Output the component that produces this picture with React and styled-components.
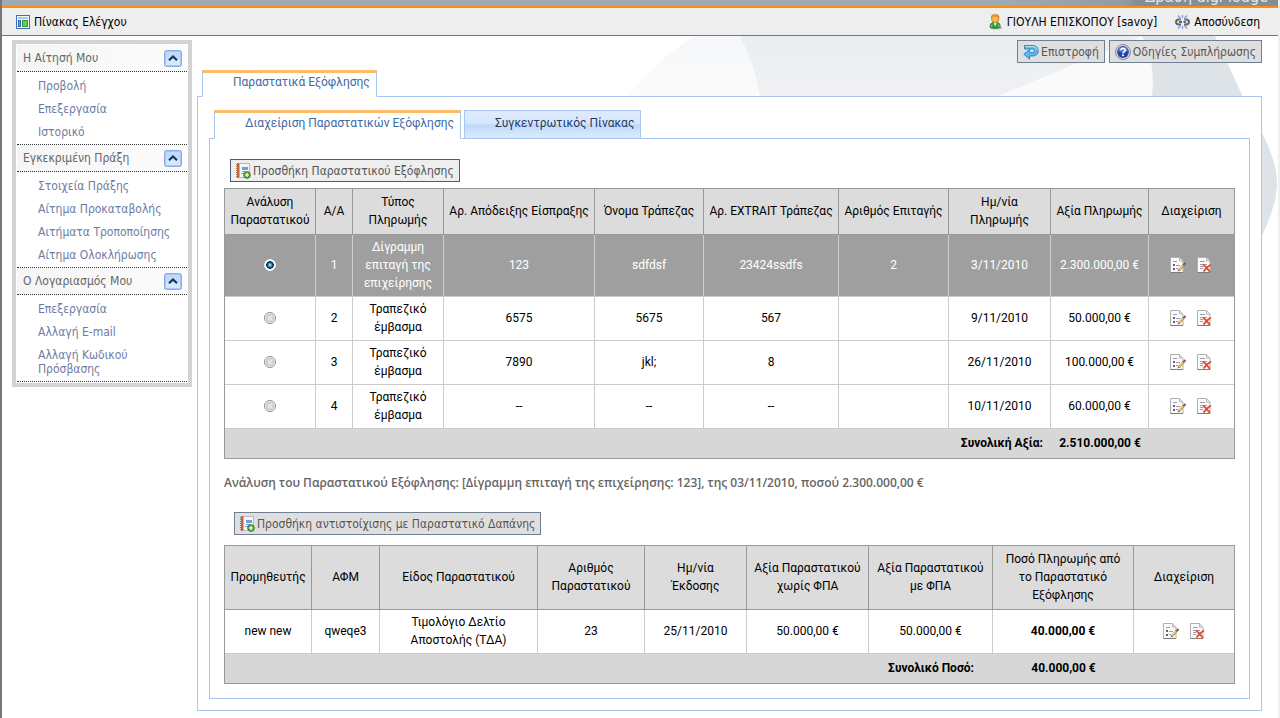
import React, { useState } from "react";
import styled, { createGlobalStyle } from "styled-components";

const menu = [
    { title: "Η Αίτησή Μου", items: ["Προβολή", "Επεξεργασία", "Ιστορικό"] },
    { title: "Εγκεκριμένη Πράξη", items: ["Στοιχεία Πράξης", "Αίτημα Προκαταβολής", "Αιτήματα Τροποποίησης", "Αίτημα Ολοκλήρωσης"] },
    { title: "Ο Λογαριασμός Μου", items: ["Επεξεργασία", "Αλλαγή E-mail", "Αλλαγή Κωδικού\nΠρόσβασης"] },
]

const paymentColumns = [
    { label: "Ανάλυση Παραστατικού", width: 91 },
    { label: "Α/Α", width: 37 },
    { label: "Τύπος\nΠληρωμής", width: 91 },
    { label: "Αρ. Απόδειξης Είσπραξης", width: 151 },
    { label: "Όνομα Τράπεζας", width: 109 },
    { label: "Αρ. EXTRAIT Τράπεζας", width: 135 },
    { label: "Αριθμός Επιταγής", width: 110 },
    { label: "Ημ/νία\nΠληρωμής", width: 102 },
    { label: "Αξία Πληρωμής", width: 98 },
    { label: "Διαχείριση", width: 85 },
]

const payments = [
    { id: 1, type: "Δίγραμμη επιταγή της επιχείρησης", receipt: "123", bank: "sdfdsf", extrait: "23424ssdfs", cheque: "2", date: "3/11/2010", amount: "2.300.000,00 €" },
    { id: 2, type: "Τραπεζικό έμβασμα", receipt: "6575", bank: "5675", extrait: "567", cheque: "", date: "9/11/2010", amount: "50.000,00 €" },
    { id: 3, type: "Τραπεζικό έμβασμα", receipt: "7890", bank: "jkl;", extrait: "8", cheque: "", date: "26/11/2010", amount: "100.000,00 €" },
    { id: 4, type: "Τραπεζικό έμβασμα", receipt: "--", bank: "--", extrait: "--", cheque: "", date: "10/11/2010", amount: "60.000,00 €" },
]

const expenseColumns = [
    { label: "Προμηθευτής", width: 87 },
    { label: "ΑΦΜ", width: 68 },
    { label: "Είδος Παραστατικού", width: 158 },
    { label: "Αριθμός Παραστατικού", width: 107 },
    { label: "Ημ/νία\nΈκδοσης", width: 102 },
    { label: "Αξία Παραστατικού\nχωρίς ΦΠΑ", width: 122 },
    { label: "Αξία Παραστατικού\nμε ΦΠΑ", width: 124 },
    { label: "Ποσό Πληρωμής από\nτο Παραστατικό\nΕξόφλησης", width: 141 },
    { label: "Διαχείριση", width: 100 },
]

const DashboardIcon = () => (
    <svg width="14" height="14" viewBox="0 0 14 14" aria-hidden="true">
        <rect x="0.5" y="0.5" width="13" height="13" fill="#f2f8ff" stroke="#3f6fb5" />
        <rect x="2" y="2" width="10" height="2" fill="#a5c8f0" />
        <rect x="2" y="5" width="3" height="7" fill="#2f65b0" />
        <rect x="3" y="6" width="1" height="5" fill="#7fa9dd" />
        <rect x="6" y="5" width="6" height="7" fill="#3c9a32" />
        <rect x="7" y="6" width="4" height="5" fill="#6cc45c" />
    </svg>
)

const UserIcon = () => (
    <svg width="13" height="16" viewBox="0 0 13 16" aria-hidden="true">
        <ellipse cx="7" cy="14" rx="6" ry="1.6" fill="#b9b9b9" />
        <path d="M1 13.5C0.6 10.5 2 8.6 4 8.4h4.4c2 0.2 3.2 2.1 2.8 5.1Q6 15.6 1 13.5z" fill="#2f9a3c" stroke="#1d7a2a" strokeWidth="0.6" />
        <path d="M4.5 8.5L6.2 12.5 8 8.5z" fill="#eef9ee" />
        <path d="M3 10.5l-0.5 2.5M9.5 10.5l0.5 2.5" stroke="#8fd692" />
        <path d="M2.4 3.2Q2.200 0.5 6.2 0.5T10 3.2L9.700 6.3Q9 8.9 6.2 8.9T2.700 6.3z" fill="#e9962c" stroke="#b9711b" strokeWidth="0.6" />
        <path d="M3.6 3.6Q6 2.4 8.8 3.6V6Q8.200 7.8 6.2 7.8T3.6 6z" fill="#f8bc66" />
    </svg>
)

const LogoutIcon = () => (
    <svg width="15" height="14" viewBox="0 0 15 14" fill="none" aria-hidden="true">
        <path d="M3 0.5l2.5 3M7.5 0v3M12 0.5L9.5 3.5M3 13.5l2.5-3M7.5 14v-3M12 13.5l-2.5-3" stroke="#7ea4dc" strokeWidth="1.3" />
        <path d="M6 4.500H4Q1 4.800 1 7t3 2.500H6M4 7h3M9 4.500h2Q14 4.800 14 7t-3 2.500H9M11 7H8.500" stroke="#666" strokeWidth="2" />
        <path d="M6 4.300H3.500M9 4.300h2.500" stroke="#aaa" strokeWidth="0.700" />
    </svg>
)

const BackIcon = () => (
    <svg width="16" height="16" viewBox="0 0 16 16" aria-hidden="true">
        <path d="M1.5 1.5h8.2Q15.2 2 15.2 6.8T9.7 12H6.5v3L0.8 10.2 6.5 5.6v3h3Q11.6 8.4 11.6 6.8T9.500 5H1.5z" fill="#5db9ee" stroke="#2d7fbd" strokeWidth="0.9" />
        <path d="M2.5 2.6h7Q13.8 3 14 6" fill="none" stroke="#c2e8fb" />
    </svg>
)

const HelpIcon = () => (
    <svg width="16" height="16" viewBox="0 0 16 16" aria-hidden="true">
        <circle cx="8" cy="8" r="7.5" fill="#d8d8d8" stroke="#8c8c8c" />
        <circle cx="8" cy="8" r="5.9" fill="#2446a8" />
        <path d="M2.8 7Q3.5 2.8 8 2.7T13.2 7Q8 9 2.8 7z" fill="#5a7fd8" />
        <path d="M5.9 6.3Q6 4.4 8 4.4T10.2 6.1Q10.2 7.3 8.9 7.9 8 8.4 8 9.4" fill="none" stroke="#fff" strokeWidth="1.6" />
        <rect x="7.1" y="10.4" width="1.8" height="1.7" fill="#fff" />
    </svg>
)

const AddDocIcon = () => (
    <svg width="15" height="16" viewBox="0 0 15 16" aria-hidden="true">
        <path d="M3.5 0.5h10v14h-10z" fill="#f5f6f8" stroke="#b8b8b8" />
        <rect x="1" y="0" width="2" height="15" fill="#c2683a" />
        <path d="M0 1.5h2M0 3.5h2M0 5.5h2M0 7.5h2M0 9.5h2M0 11.5h2M0 13.5h2" stroke="#a5714f" />
        <rect x="6" y="4" width="6" height="3" fill="#6f9be2" />
        <path d="M6 8.5h4M5 10.5h3" stroke="#7ea3e0" />
        <circle cx="11" cy="12" r="3.4" fill="#5aa336" stroke="#3b7a22" strokeWidth="0.8" />
        <path d="M9 12h4M11 10v4" stroke="#fff" strokeWidth="1.2" />
    </svg>
)

const EditIcon = () => (
    <svg width="16" height="16" viewBox="0 0 16 16" aria-hidden="true">
        <path d="M0.5 0.5h9l3.5 3.5v11.500H0.5z" fill="#fbfbfb" stroke="#b0b0b0" />
        <path d="M0.5 15.5H13" stroke="#7c7c7c" />
        <path d="M9.5 0.5V4H13" fill="#e6e6e6" stroke="#b5b5b5" />
        <path d="M3 4.5h4M6 8.5h4M6 11.5h2" stroke="#9a9ab4" />
        <path d="M3 7h2v2H3zM3 11h2v2H3z" fill="#5c5c84" />
        <path d="M8.5 13.5L14 7.5" stroke="#b08a44" strokeWidth="2.4" />
        <path d="M8.5 13.2L13.5 7.8" stroke="#f0ce82" strokeWidth="1.2" />
        <path d="M13.3 8.2L14.300 7.200" stroke="#4a7a4a" strokeWidth="2" />
        <path d="M14.300 7.200L15.5 6" stroke="#b03a3a" strokeWidth="2" />
        <path d="M7.5 14.5l1-2 1 1z" fill="#6b5426" />
    </svg>
)

const DeleteIcon = () => (
    <svg width="16" height="16" viewBox="0 0 16 16" aria-hidden="true">
        <path d="M0.5 0.5h9l3.5 3.5v11.500H0.5z" fill="#fbfbfb" stroke="#b0b0b0" />
        <path d="M0.5 15.5H13" stroke="#7c7c7c" />
        <path d="M9.5 0.5V4H13" fill="#e6e6e6" stroke="#b5b5b5" />
        <path d="M3 4.5h5M3 7.5h7M3 9.5h3M3 11.500h3" stroke="#9a9ab4" />
        <path d="M6 7.5Q9.5 10 13 15M14 7.5Q9.5 10 6.5 14.5" fill="none" stroke="#e2492f" strokeWidth="1.8" />
    </svg>
)

const ChevronIcon = () => (
    <svg width="18" height="17" viewBox="0 0 18 17" aria-hidden="true">
        <rect x="0.5" y="0.5" width="17" height="16" rx="2" fill="#a9c4f2" stroke="#8faae6" />
        <rect x="2" y="2" width="14" height="13" rx="1" fill="#bfdafb" />
        <rect x="2" y="9" width="14" height="6" fill="#d3eafe" />
        <path d="M5 10.2L9 6.5l4 3.7" fill="none" stroke="#1b3358" strokeWidth="2.2" />
    </svg>
)

const Backdrop = () => (
    <BackdropSvg width="660" height="260" viewBox="620 36 660 260" aria-hidden="true">
        <defs>
            <linearGradient id="pale" x1="0" y1="0" x2="0" y2="1">
                <stop offset="0" stopColor="#f5f7fa" />
                <stop offset="1" stopColor="#fbfbfb" />
            </linearGradient>
            <linearGradient id="mist" x1="0" y1="0" x2="0" y2="1">
                <stop offset="0" stopColor="#e9eef0" />
                <stop offset="1" stopColor="#f0f0f3" />
            </linearGradient>
        </defs>
        <path d="M694 36Q654 62 627 97H762V36z" fill="url(#pale)" />
        <path d="M740 36Q755 64 760 97H996L1143 36z" fill="url(#mist)" />
        <path d="M996 97L1143 36H1160V97z" fill="#fafafa" />
        <path d="M1142 36Q1156 62 1152 97H1243L1215 36z" fill="#dde3e6" />
        <path d="M1255 120Q1278 160 1277 185T1255 250z" fill="#dde3e6" />
    </BackdropSvg>
)

const RowActions = () => (
    <Actions>
        <IconButton aria-label="Επεξεργασία"><EditIcon /></IconButton>
        <IconButton aria-label="Διαγραφή"><DeleteIcon /></IconButton>
    </Actions>
)

const TableHead = ({columns}) => (
    <>
        <colgroup>
            {columns.map((column) => <Col key={column.label} $width={column.width} />)}
        </colgroup>
        <thead>
            <tr>
                {columns.map((column) => <th key={column.label} scope="col">{column.label}</th>)}
            </tr>
        </thead>
    </>
)

const Sidebar = () => (
    <Menu>
        {menu.map((group) => (
            <section key={group.title}>
                <MenuTitle>
                    <h2>{group.title}</h2>
                    <IconButton aria-label={group.title}><ChevronIcon /></IconButton>
                </MenuTitle>
                <MenuList>
                    {group.items.map((item) => <li key={item}><a href="#">{item}</a></li>)}
                </MenuList>
            </section>
        ))}
    </Menu>
)

const PaymentsTable = ({selected, onSelect}) => (
    <Table>
        <TableHead columns={paymentColumns} />
        <tbody>
            {payments.map((payment) => (
                <Row key={payment.id} $selected={payment.id === selected}>
                    <td>
                        <Radio
                            type="radio"
                            name="payment"
                            aria-label={`Παραστατικό ${payment.id}`}
                            checked={payment.id === selected}
                            onChange={() => onSelect(payment.id)}
                        />
                    </td>
                    <td>{payment.id}</td>
                    <td>{payment.type}</td>
                    <td>{payment.receipt}</td>
                    <td>{payment.bank}</td>
                    <td>{payment.extrait}</td>
                    <td>{payment.cheque}</td>
                    <td>{payment.date}</td>
                    <td>{payment.amount}</td>
                    <td><RowActions /></td>
                </Row>
            ))}
        </tbody>
        <tfoot>
            <tr>
                <TotalLabel colSpan="8">Συνολική Αξία:</TotalLabel>
                <td>2.510.000,00 €</td>
                <td></td>
            </tr>
        </tfoot>
    </Table>
)

const ExpensesTable = () => (
    <Table>
        <TableHead columns={expenseColumns} />
        <tbody>
            <Row>
                <td>new new</td>
                <td>qweqe3</td>
                <td>Τιμολόγιο Δελτίο Αποστολής (ΤΔΑ)</td>
                <td>23</td>
                <td>25/11/2010</td>
                <td>50.000,00 €</td>
                <td>50.000,00 €</td>
                <td><strong>40.000,00 €</strong></td>
                <td><RowActions /></td>
            </Row>
        </tbody>
        <tfoot>
            <tr>
                <td colSpan="6"></td>
                <td>Συνολικό Ποσό:</td>
                <td>40.000,00 €</td>
                <td></td>
            </tr>
        </tfoot>
    </Table>
)

const App = () => {
    const [selected, setSelected] = useState(1)

    return (
        <Page>
            <GlobalStyle />
            <Banner><span>Δράση digi-lodge</span></Banner>
            <Toolbar>
                <ToolbarLink href="#"><DashboardIcon />Πίνακας Ελέγχου</ToolbarLink>
                <ToolbarGroup>
                    <ToolbarUser><UserIcon />ΓΙΟΥΛΗ ΕΠΙΣΚΟΠΟΥ [savoy]</ToolbarUser>
                    <ToolbarLink href="#"><LogoutIcon />Αποσύνδεση</ToolbarLink>
                </ToolbarGroup>
            </Toolbar>
            <Body>
                <Backdrop />
                <Sidebar />
                <Main>
                    <TopButtons>
                        <Button><BackIcon />Επιστροφή</Button>
                        <Button><HelpIcon />Οδηγίες Συμπλήρωσης</Button>
                    </TopButtons>
                    <Tabs role="tablist">
                        <Tab role="tab" aria-selected="true" $active>Παραστατικά Εξόφλησης</Tab>
                    </Tabs>
                    <Panel>
                        <Tabs role="tablist">
                            <Tab role="tab" aria-selected="true" $active $tall>Διαχείριση Παραστατικών Εξόφλησης</Tab>
                            <Tab role="tab" aria-selected="false" $tall>Συγκεντρωτικός Πίνακας</Tab>
                        </Tabs>
                        <InnerPanel>
                            <ButtonRow $indent={6}>
                                <Button $focused><AddDocIcon />Προσθήκη Παραστατικού Εξόφλησης</Button>
                            </ButtonRow>
                            <PaymentsTable selected={selected} onSelect={setSelected} />
                            <Caption>Ανάλυση του Παραστατικού Εξόφλησης: [Δίγραμμη επιταγή της επιχείρησης: 123], της 03/11/2010, ποσού 2.300.000,00 €</Caption>
                            <ButtonRow $indent={10} $gap={10}>
                                <Button><AddDocIcon />Προσθήκη αντιστοίχισης με Παραστατικό Δαπάνης</Button>
                            </ButtonRow>
                            <ExpensesTable />
                        </InnerPanel>
                    </Panel>
                </Main>
            </Body>
        </Page>
    )
}

export default App;

const uiFont = `"DejaVu Sans Condensed", "Noto Sans", sans-serif`
const tableFont = `Roboto, "Open Sans", sans-serif`

const GlobalStyle = createGlobalStyle`
    *{
        box-sizing: border-box;
    }
    body{
        margin: 0;
        background: #fff;
        font-family: ${uiFont};
        font-size: 12px;
        color: #000;
    }
    button{
        font: inherit;
        cursor: pointer;
    }
    a{
        color: inherit;
        text-decoration: none;
    }
`

const Page = styled.div`
    min-height: 100vh;
    display: flex;
    flex-direction: column;
    border-left: 2px solid #777;
    border-right: 2px solid #efefef;
`

const Banner = styled.header`
    height: 8px;
    display: flex;
    justify-content: flex-end;
    align-items: flex-end;
    padding-right: 10px;
    overflow: hidden;
    border-bottom: 2px solid #ff8c0a;
    background: linear-gradient(90deg, #9dabb4 78%, #909da5 88%, #828e95 89%);
    color: #e3e8eb;
    font-size: 16px;
    line-height: 18px;
`

const Toolbar = styled.div`
    height: 28px;
    display: flex;
    align-items: center;
    justify-content: space-between;
    padding: 0 18px 0 14px;
    background: #eee;
    border-bottom: 1px solid #777;
`

const ToolbarGroup = styled.div`
    display: flex;
    gap: 18px;
`

const ToolbarUser = styled.span`
    display: flex;
    align-items: center;
    gap: 5px;
`

const ToolbarLink = styled.a`
    display: flex;
    align-items: center;
    gap: 4px;
`

const Body = styled.div`
    flex: 1;
    display: flex;
    align-items: flex-start;
    gap: 5px;
    padding: 4px 16px 7px 10px;
    position: relative;
`

const BackdropSvg = styled.svg`
    position: absolute;
    top: 0;
    right: -2px;
    z-index: -1;
`

const Menu = styled.nav`
    width: 180px;
    flex: none;
    padding: 1px;
    border: 4px solid #d3d3d3;
    background: #fff;
    color: #666;
`

const MenuTitle = styled.div`
    height: 27px;
    display: flex;
    align-items: center;
    justify-content: space-between;
    padding: 0 5px 0 6px;
    border-bottom: 1px dotted #333;
    background: linear-gradient(90deg, #f5f5f5, #fcfcfc);
    h2{
        margin: 0;
        font-size: 12px;
        font-weight: 400;
    }
`

const MenuList = styled.ul`
    margin: 0;
    padding: 2px 8px 1px 21px;
    list-style: none;
    border-bottom: 1px dotted #333;
    color: #6c7da3;
    line-height: 14px;
    white-space: pre-line;
    li{
        padding: 5px 0 4px;
    }
`

const IconButton = styled.button`
    display: flex;
    padding: 0;
    border: none;
    background: none;
`

const Main = styled.main`
    flex: 1;
    min-width: 0;
`

const TopButtons = styled.div`
    height: 30px;
    display: flex;
    justify-content: flex-end;
    align-items: flex-start;
    gap: 4px;
`

const Button = styled.button`
    height: 23px;
    display: flex;
    align-items: center;
    gap: 2px;
    padding: 0 5px;
    border: 1px solid ${({$focused}) => $focused ? "#4a5f75" : "#708090"};
    background: ${({$focused}) => $focused ? "#eee" : "#dfdfdf"};
    color: #555;
    white-space: nowrap;
`

const Tabs = styled.div`
    display: flex;
    gap: 3px;
    padding-left: 5px;
    margin-bottom: -1px;
    position: relative;
`

const Tab = styled.button`
    height: ${({$tall}) => $tall ? 29 : 27}px;
    display: flex;
    align-items: center;
    padding: 0 6px ${({$active}) => $active ? 5 : 3}px 30px;
    border: 1px solid #a9c6ee;
    border-top: ${({$active}) => $active ? "3px solid #fb6" : "1px solid #a9c6ee"};
    border-bottom-color: ${({$active}) => $active ? "#fff" : "#a9c6ee"};
    background: ${({$active}) => $active ? "#fff" : "linear-gradient(#deebfd 0%, #d8e7fd 45%, #bfd9fa 52%, #dcebff 100%)"};
    color: ${({$active}) => $active ? "#416aa3" : "#27395e"};
    font-family: ${tableFont};
    white-space: nowrap;
`

const Panel = styled.div`
    padding: 13px 11px 11px;
    border: 1px solid #a9c6ee;
    background: #fff;
`

const InnerPanel = styled.div`
    padding: 20px 14px 14px;
    border: 1px solid #a9c6ee;
    background: #fff;
`

const ButtonRow = styled.div`
    display: flex;
    padding-left: ${({$indent}) => $indent}px;
    margin-bottom: ${({$gap}) => $gap || 6}px;
`

const Table = styled.table`
    width: 100%;
    table-layout: fixed;
    border-collapse: separate;
    border-spacing: 0;
    border: 1px solid #999;
    font-family: ${tableFont};
    line-height: 18px;
    text-align: center;
    th{
        padding: 4px 4px 5px;
        border-right: 1px solid #999;
        border-bottom: 1px solid #999;
        background: #dcdcdc;
        font-weight: 400;
        white-space: pre-line;
    }
    td{
        padding: 3px 6px 4px;
        border-right: 1px solid #ccc;
        border-bottom: 1px solid #ccc;
    }
    th:last-child, td:last-child{
        border-right: none;
    }
    tfoot td{
        height: 29px;
        padding: 4px 8px 6px;
        border: none;
        background: #d7d7d7;
        font-weight: 700;
        white-space: nowrap;
    }
`

const Col = styled.col`
    width: ${({$width}) => $width}px;
`

const Row = styled.tr`
    background: ${({$selected}) => $selected ? "#9f9f9f" : "#fff"};
    color: ${({$selected}) => $selected ? "#fff" : "#000"};
`

const TotalLabel = styled.td`
    text-align: right;
`

const Radio = styled.input`
    appearance: none;
    display: block;
    width: 12px;
    height: 12px;
    margin: 0 auto;
    border: 1px solid #8e8f8f;
    border-radius: 50%;
    background: radial-gradient(circle, #dfe3e6 35%, #b5bcc2 50%, #f4f4f4 60%);
    &:checked{
        border-color: #f4f4f4;
        background: radial-gradient(circle, #7fd8f5 10%, #12567f 35%, #0b2c45 50%, #fff 58%);
    }
`

const Actions = styled.div`
    display: flex;
    justify-content: center;
    gap: 11px;
`

const Caption = styled.p`
    margin: 15px 0 20px;
    color: #666;
    font-family: "Open Sans", sans-serif;
    font-weight: 600;
    line-height: 18px;
`
